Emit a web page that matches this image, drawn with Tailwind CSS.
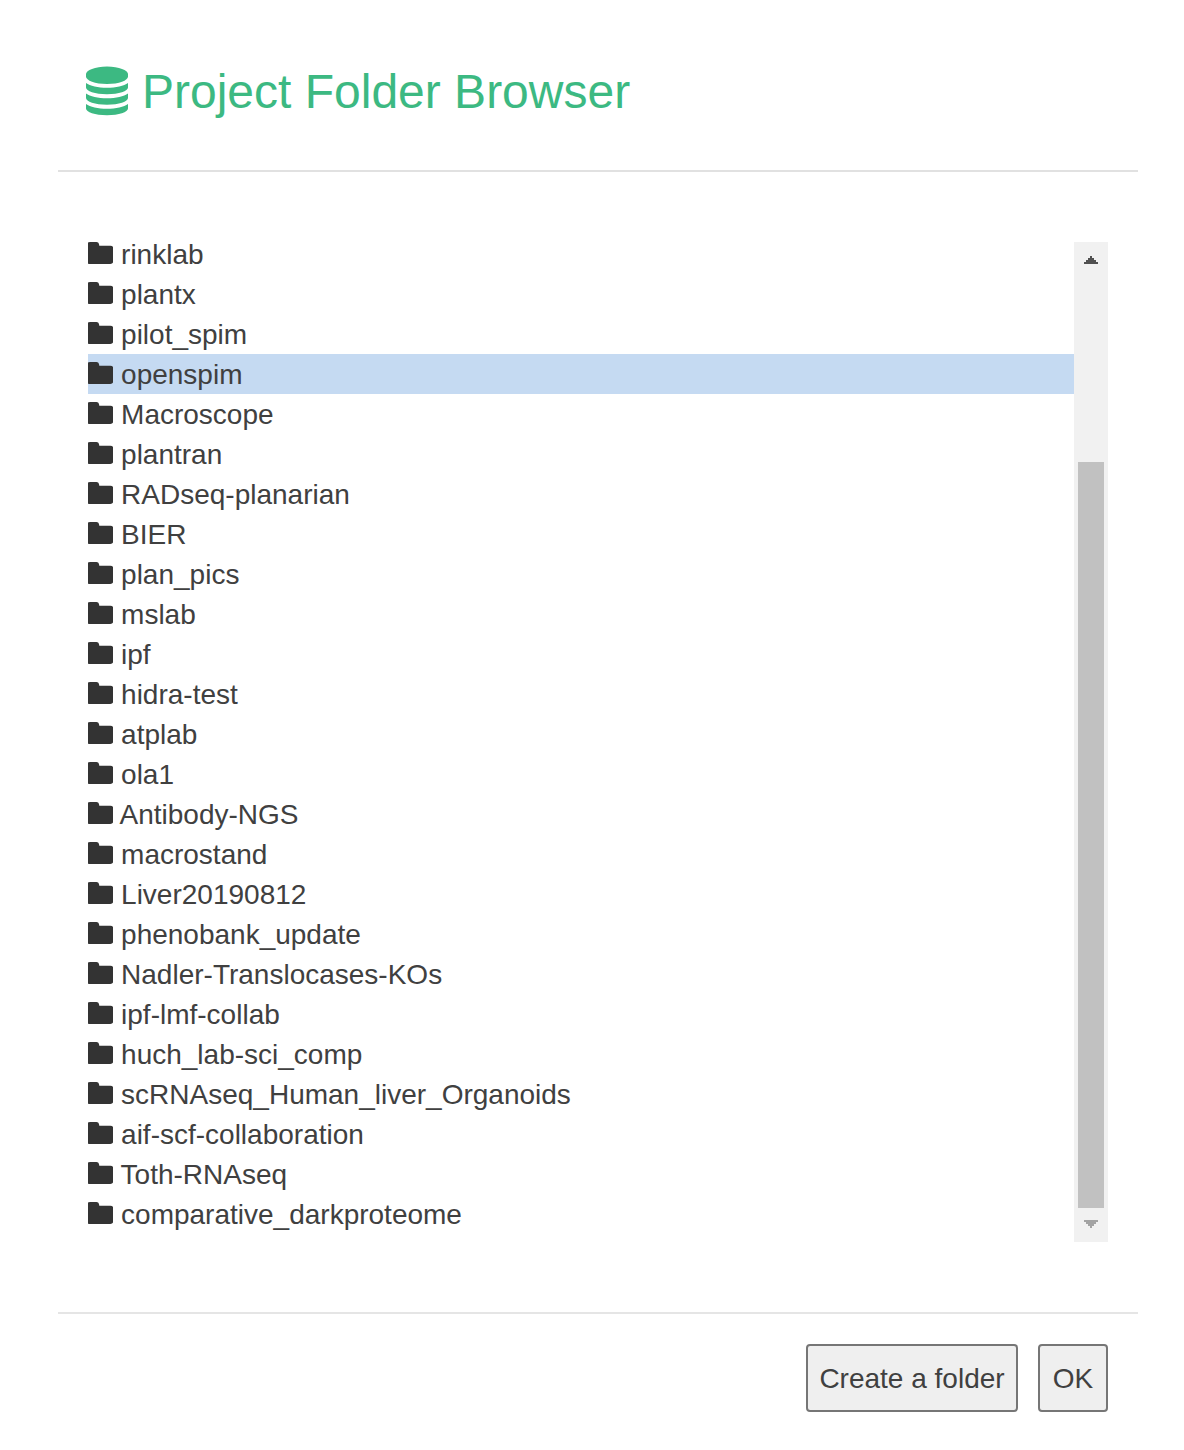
<!DOCTYPE html>
<html lang="en">
<head>
<meta charset="utf-8">
<title>Project Folder Browser</title>
<script src="https://cdn.jsdelivr.net/npm/@tailwindcss/browser@4"></script>
</head>
<body class="bg-white font-['Liberation_Sans',Arial,sans-serif] text-[28px] leading-[40px] text-[#404040]">
<main class="flex h-[1450px] w-[1184px] flex-col overflow-hidden pl-[58px] pr-[46px]">
  <header class="flex h-[172px] items-start border-b-2 border-[#e1e1e1] pl-[28px] pt-[66px]">
    <svg class="h-[50px] w-[42px] shrink-0 fill-[#3cb982]" viewBox="0 0 42 50">
      <path d="M21 0.500C33 0.500 42 4.500 42 8v2.500C42 14.500 33 18 21 18S0 14.500 0 10.500V8C0 4.500 9 0.500 21 0.500z"/>
      <path id="disk" d="M0 17c4 3 12 4.800 21 4.800S38 20 42 17v4.500C42 25 33 28.200 21 28.200S0 25 0 21.500z"/>
      <use href="#disk" y="10.500"/>
      <use href="#disk" y="21"/>
    </svg>
    <h1 class="ml-[14px] mt-px whitespace-nowrap text-[48px] leading-[50px] text-[#3cb982]">Project Folder Browser</h1>
  </header>

  <section class="mx-[30px] mt-[70px] flex h-[1000px]">
    <ul id="folders" class="-mt-2 flex-1"></ul>
    <div class="flex w-[34px] flex-col items-center bg-[#f1f1f1]">
      <svg class="mt-[14px] h-2 w-[14px] fill-[#505050]" viewBox="0 0 14 8" shape-rendering="crispEdges"><path d="M6 0h2v2h2v2h2v2h2v2H0V6h2V4h2V2h2z"/></svg>
      <div class="mt-[198px] h-[746px] w-[26px] bg-[#c1c1c1]"></div>
      <svg class="mt-[12px] h-2 w-[14px] fill-[#a3a3a3]" viewBox="0 0 14 8" shape-rendering="crispEdges"><path d="M0 0h14v2h-2v2h-2v2H8v2H6V6H4V4H2V2H0z"/></svg>
    </div>
  </section>

  <footer class="mt-[70px] flex justify-end gap-5 border-t-2 border-[#e5e5e5] pr-[30px] pt-[30px]">
    <button class="h-[68px] w-[212px] whitespace-nowrap rounded-[4px] border-2 border-[#767676] bg-[#efefef] pt-px">Create a folder</button>
    <button class="h-[68px] w-[70px] rounded-[4px] border-2 border-[#767676] bg-[#efefef] pt-px">OK</button>
  </footer>
</main>
<script>
const selected = 'openspim';
const names = ['rinklab','plantx','pilot_spim','openspim','Macroscope','plantran','RADseq-planarian','BIER','plan_pics','mslab','ipf','hidra-test','atplab','ola1','Antibody-NGS','macrostand','Liver20190812','phenobank_update','Nadler-Translocases-KOs','ipf-lmf-collab','huch_lab-sci_comp','scRNAseq_Human_liver_Organoids','aif-scf-collaboration','Toth-RNAseq','comparative_darkproteome'];
document.getElementById('folders').innerHTML = names.map(n => `<li class="h-[40px] whitespace-nowrap leading-[42px] ${n === selected ? 'bg-[#c5daf2]' : ''}"><svg class="inline-block h-[22px] w-[25.300px] align-[0px] fill-[#333]" viewBox="0 0 25.300 22"><path d="M0 .5Q.8 0 2 0h6.500Q10.500 0 11 2l.3 1.700H22.300q3 0 3 3V19q0 3-3 3H1.500Q.6 22 0 21.500z"/></svg> ${n}</li>`).join('');
</script>
</body>
</html>
